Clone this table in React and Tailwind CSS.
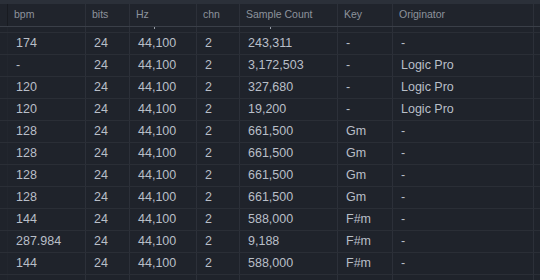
import React from "react";

const rows = [
  { bpm: "174", bits: "24", hz: "44,100", chn: "2", count: "243,311", key: "-", orig: "-" },
  { bpm: "-", bits: "24", hz: "44,100", chn: "2", count: "3,172,503", key: "-", orig: "Logic Pro" },
  { bpm: "120", bits: "24", hz: "44,100", chn: "2", count: "327,680", key: "-", orig: "Logic Pro" },
  { bpm: "120", bits: "24", hz: "44,100", chn: "2", count: "19,200", key: "-", orig: "Logic Pro" },
  { bpm: "128", bits: "24", hz: "44,100", chn: "2", count: "661,500", key: "Gm", orig: "-" },
  { bpm: "128", bits: "24", hz: "44,100", chn: "2", count: "661,500", key: "Gm", orig: "-" },
  { bpm: "128", bits: "24", hz: "44,100", chn: "2", count: "661,500", key: "Gm", orig: "-" },
  { bpm: "128", bits: "24", hz: "44,100", chn: "2", count: "661,500", key: "Gm", orig: "-" },
  { bpm: "144", bits: "24", hz: "44,100", chn: "2", count: "588,000", key: "F#m", orig: "-" },
  { bpm: "287.984", bits: "24", hz: "44,100", chn: "2", count: "9,188", key: "F#m", orig: "-" },
  { bpm: "144", bits: "24", hz: "44,100", chn: "2", count: "588,000", key: "F#m", orig: "-" },
  { bpm: "", bits: "", hz: "", chn: "", count: "", key: "", orig: "" },
];

const cols = "grid grid-cols-[8px_78px_44px_67px_43px_98px_55px_141px_1fr]";
const cell = "border-r border-[#2c3039] pl-[8px] flex items-center whitespace-nowrap overflow-hidden";

function Row({ r }) {
  return (
    <div className={`${cols} h-[22px] shrink-0 border-b border-[#2a2e36]`}>
      <div className="border-r border-[#22262e]" />
      <div className={cell}>{r.bpm}</div>
      <div className={cell}>{r.bits}</div>
      <div className={cell}>{r.hz}</div>
      <div className={cell}>{r.chn}</div>
      <div className={cell}>{r.count}</div>
      <div className={cell}>{r.key}</div>
      <div className={cell}>{r.orig}</div>
      <div />
    </div>
  );
}

// row scrolled under the header: only comma tails peek out
function PartialRow() {
  const c = "border-r border-[#2c3039]";
  return (
    <div className={`${cols} h-[6px] shrink-0 border-b border-[#2a2e36]`}>
      <div className="border-r border-[#22262e]" />
      <div className={c} />
      <div className={c} />
      <div className={c}>
        <div className="ml-[24px] w-[1px] h-[2px] bg-[#9aa0a9]" />
      </div>
      <div className={c} />
      <div className={c}>
        <div className="ml-[30px] w-[1px] h-[2px] bg-[#9aa0a9]" />
      </div>
      <div className={c} />
      <div className={c} />
      <div />
    </div>
  );
}

export default function App() {
  const head = "border-r border-[#2c3039] pl-[6px] flex items-center whitespace-nowrap";
  return (
    <div
      className="w-[540px] h-[280px] overflow-hidden bg-[#1f232b] flex flex-col"
      style={{ fontFamily: '"Liberation Sans", Arial, sans-serif' }}
    >
      <div className="h-[4px] bg-[#2b3039] shrink-0" />
      <div className={`${cols} h-[23px] shrink-0 border-b border-[#3a3f48] text-[10.5px] text-[#8d939c] bg-[#20242c]`}>
        <div className="border-r border-[#181b21]" />
        <div className={head}>bpm</div>
        <div className={head}>bits</div>
        <div className={head}>Hz</div>
        <div className={head}>chn</div>
        <div className={head}>Sample Count</div>
        <div className={head}>Key</div>
        <div className={head}>Originator</div>
        <div />
      </div>
      <div className="flex-1 overflow-hidden flex flex-col text-[12.5px] text-[#b9bfc8]">
        <PartialRow />
        {rows.map((r, i) => (
          <Row key={i} r={r} />
        ))}
      </div>
    </div>
  );
}
